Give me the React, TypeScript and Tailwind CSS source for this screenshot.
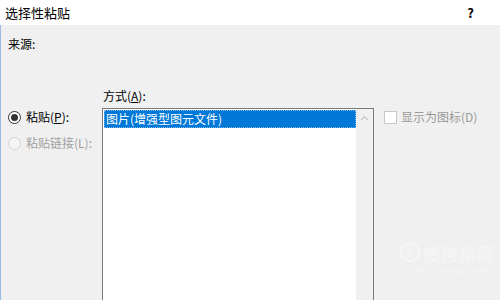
import React from "react";

const font = { fontFamily: '"Noto Sans CJK SC", "Noto Sans", sans-serif' };

export default function App() {
  return (
    <div className="w-[500px] h-[300px] overflow-hidden relative bg-[#f0f0f0] text-[12px] text-black" style={font}>
      <div className="h-[25px] bg-white flex items-center justify-between pl-[5px] pr-[26px]">
        <span className="text-[13px] leading-none">选择性粘贴</span>
        <span className="text-[13px] leading-none font-bold">?</span>
      </div>
      <div className="border-l border-[#9cb9e3] h-[275px] pl-[7px] pt-[11px]">
        <div className="leading-[16px] h-[16px]">来源:</div>
        <div className="flex mt-[36px]">
          <div className="w-[94px] pt-[21px] flex flex-col gap-[10px]">
            <div className="flex items-center h-[16px]">
              <span className="w-[13px] h-[13px] rounded-full border border-[#333] bg-white flex items-center justify-center">
                <span className="w-[7px] h-[7px] rounded-full bg-[#333]" />
              </span>
              <span className="ml-[5px] leading-[16px]">
                粘贴(<span className="underline">P</span>):
              </span>
            </div>
            <div className="flex items-center h-[16px] text-[#a0a0a0]">
              <span className="w-[13px] h-[13px] rounded-full border border-[#d5d5d5] bg-[#f4f4f4]" />
              <span className="ml-[5px] leading-[16px]">粘贴链接(L):</span>
            </div>
          </div>
          <div className="flex flex-col">
            <div className="leading-[16px] h-[16px] pl-[1px]">
              方式(<span className="underline">A</span>):
            </div>
            <div className="mt-[4px] w-[272px] h-[200px] border border-[#7a7a7a] bg-white flex">
              <div className="flex-1 pt-[1px] pl-[1px]">
                <div className="h-[18px] bg-[#0078d7] text-white leading-[18px] pl-[2px] outline outline-1 outline-dotted outline-[#7fb8e8] -outline-offset-1">
                  图片(增强型图元文件)
                </div>
              </div>
              <div className="w-[17px] bg-[#f0f0f0] flex justify-center pt-[6px]">
                <svg width="9" height="6" viewBox="0 0 9 6">
                  <path d="M1 5 L4.5 1.5 L8 5" fill="none" stroke="#c4c4c4" strokeWidth="1.2" />
                </svg>
              </div>
            </div>
          </div>
          <div className="pl-[10px] pt-[23px] flex items-start">
            <span className="w-[13px] h-[13px] border border-[#c8c8c8] bg-white" />
            <span className="ml-[4px] leading-[14px] text-[#9a9a9a] -mt-[1px]">显示为图标(D)</span>
          </div>
        </div>
      </div>
      <div className="absolute left-[400px] top-[242px] flex flex-col items-center opacity-40">
        <div className="flex items-center gap-[3px] text-white">
          <span className="w-[20px] h-[20px] rounded-full border-2 border-white flex items-center justify-center text-[12px] font-bold leading-none">S</span>
          <span className="text-[17px] leading-none tracking-[1px]">搜狗指南</span>
        </div>
        <span className="text-[8px] text-white leading-none mt-[5px] tracking-[1px]">zhinan.sogou.com</span>
      </div>
    </div>
  );
}
